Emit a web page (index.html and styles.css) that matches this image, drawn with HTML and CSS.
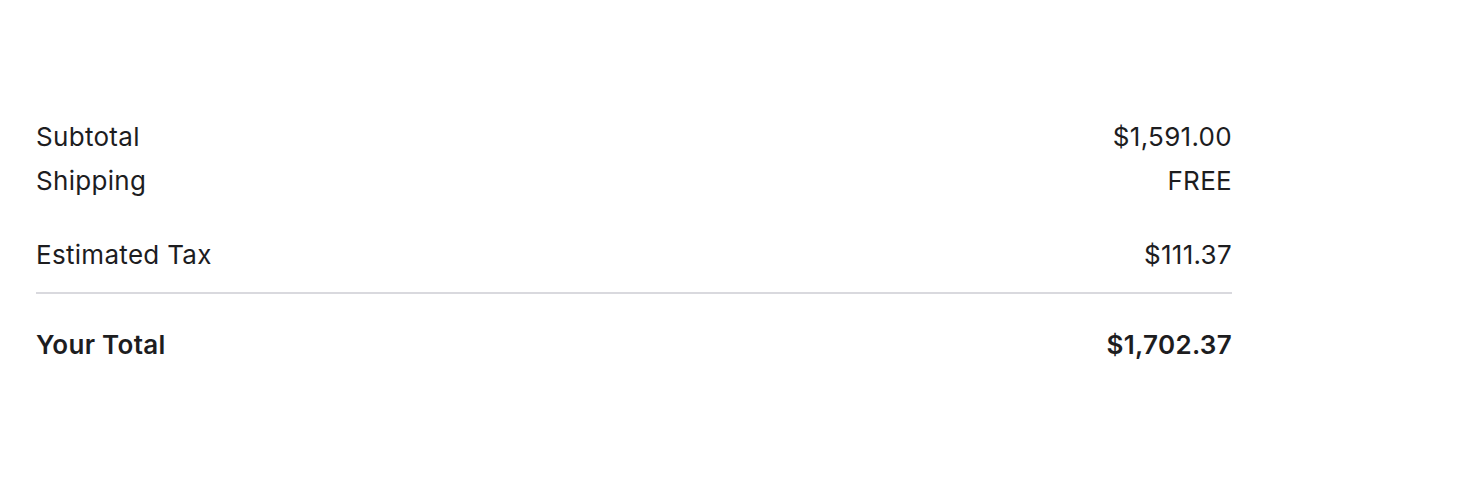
FILE: index.html
```html
<!DOCTYPE html>
<html>
<head>
<meta charset="utf-8">
<link rel="stylesheet" href="styles.css">
</head>
<body>
<div class="summary">
  <div class="group">
    <div class="row"><span>Subtotal</span><span>$1,591.00</span></div>
    <div class="row"><span>Shipping</span><span>FREE</span></div>
  </div>
  <div class="group tax">
    <div class="row"><span>Estimated Tax</span><span>$111.37</span></div>
  </div>
  <div class="total">
    <div class="row"><span>Your Total</span><span>$1,702.37</span></div>
  </div>
</div>
</body>
</html>
```
FILE: styles.css
```css
html, body { margin: 0; background: #fff; }
body {
  font-family: Inter, "Noto Sans", sans-serif;
  color: #1d1d1f;
  font-size: 26px;
  letter-spacing: 0.3px;
}
.summary {
  width: 1196px;
  margin-left: 36px;
  padding-top: 115px;
}
.row {
  display: flex;
  justify-content: space-between;
  line-height: 44px;
}
.tax {
  margin-top: 30px;
  padding-bottom: 15px;
  border-bottom: 2px solid #d9d9de;
}
.total {
  padding-top: 29px;
  font-weight: 600;
}
```
